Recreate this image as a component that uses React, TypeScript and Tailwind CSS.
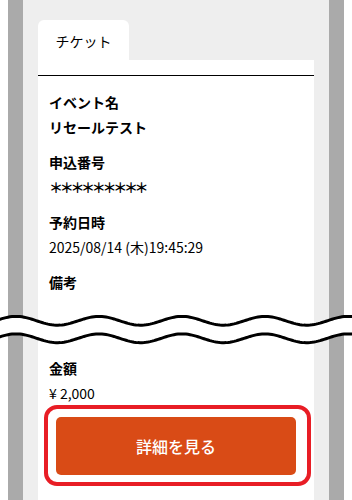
import React from "react";

const font = { fontFamily: '"Noto Sans CJK JP", "Noto Sans", sans-serif' };

function Wave() {
  const W = 352;
  const period = 83;
  const pts = (cy: number, amp: number) => {
    const arr: string[] = [];
    for (let x = -2; x <= W + 2; x += 2) {
      const y = cy - amp * Math.cos((2 * Math.PI * (x - 16)) / period);
      arr.push(`${x},${y.toFixed(2)}`);
    }
    return arr;
  };
  const top = pts(320.8, 4.4);
  const bot = pts(338.3, 4.4);
  const fill = `M${top.join(" L")} L${[...bot].reverse().join(" L")} Z`;
  return (
    <svg
      className="absolute left-0 top-0 pointer-events-none"
      width={W}
      height={500}
      viewBox={`0 0 ${W} 500`}
    >
      <path d={fill} fill="#ffffff" />
      <path d={`M${top.join(" L")}`} fill="none" stroke="#000" strokeWidth={3} />
      <path d={`M${bot.join(" L")}`} fill="none" stroke="#000" strokeWidth={3} />
    </svg>
  );
}

function Field({ label, value, bold }: { label: string; value?: React.ReactNode; bold?: boolean }) {
  return (
    <div className="mb-[10px]">
      <div className="text-[14px] leading-[25px] font-bold text-black">{label}</div>
      {value !== undefined && (
        <div className={`text-[14px] leading-[25px] text-black ${bold ? "font-bold" : ""}`}>{value}</div>
      )}
    </div>
  );
}

export default function App() {
  return (
    <div className="relative w-[352px] h-[500px] overflow-hidden bg-white" style={font}>
      <div className="relative mx-[8px] h-[500px] px-[15px] bg-[#aaaaaa]">
        <div className="h-full bg-[#eeeeee] px-[15px] pt-[20px]">
          <div className="flex">
            <div className="w-[91px] h-[55px] bg-white rounded-t-[6px] flex items-start justify-center pt-[9px]">
              <span className="text-[14px] leading-[24px] text-black">チケット</span>
            </div>
            <div className="flex-1 mt-[40px] h-[15px] bg-white" />
          </div>
          <div className="h-[1px] bg-black" />
          <div className="bg-white h-[500px] pt-[14px]">
            <div className="pl-[11px]">
              <Field label="イベント名" value="リセールテスト" bold />
              <Field
                label="申込番号"
                value={<span className="font-bold tracking-[-3.3px]">＊＊＊＊＊＊＊＊＊</span>}
              />
              <Field label="予約日時" value="2025/08/14 (木)19:45:29" />
              <div className="text-[14px] leading-[25px] font-bold text-black">備考</div>
              <div className="h-[61px]" />
              <div className="text-[14px] leading-[25px] font-bold text-black">金額</div>
              <div className="text-[14px] leading-[25px] text-black">¥ 2,000</div>
            </div>
            <div className="relative mx-auto mt-[11px] w-[240px]">
              <div className="absolute left-[-12px] right-[-15px] top-[-12px] bottom-[-11px] rounded-[13px] border-[4px] border-[#e81d25]" />
              <button className="w-[240px] h-[58px] rounded-[5px] bg-[#d94b16] text-white text-[16px] font-medium">
                詳細を見る
              </button>
            </div>
          </div>
        </div>
      </div>
      <Wave />
    </div>
  );
}
